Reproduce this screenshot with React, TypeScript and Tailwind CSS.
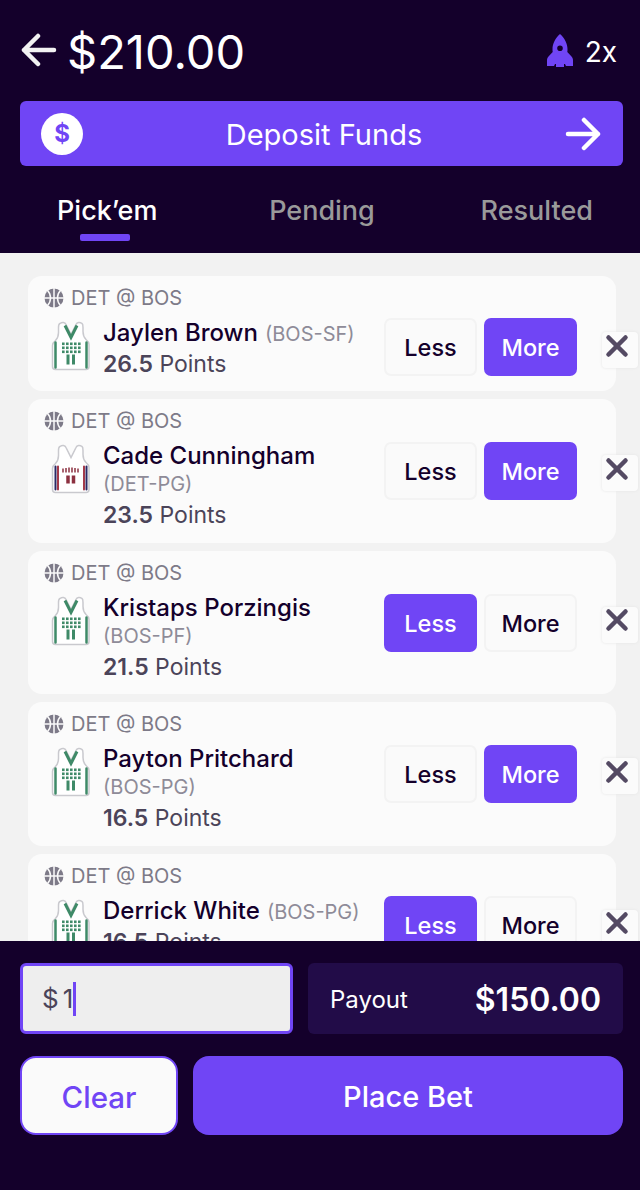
import { X } from "lucide-react";

const font = "font-['Inter','Noto_Sans',sans-serif]";

interface Pick {
  name: string;
  team: string;
  line: string;
  choice: "Less" | "More";
  wrap: boolean;
  away?: boolean;
}

const picks: Pick[] = [
  { name: "Jaylen Brown", team: "(BOS-SF)", line: "26.5", choice: "More", wrap: false },
  { name: "Cade Cunningham", team: "(DET-PG)", line: "23.5", choice: "More", wrap: true, away: true },
  { name: "Kristaps Porzingis", team: "(BOS-PF)", line: "21.5", choice: "Less", wrap: true },
  { name: "Payton Pritchard", team: "(BOS-PG)", line: "16.5", choice: "More", wrap: true },
  { name: "Derrick White", team: "(BOS-PG)", line: "16.5", choice: "Less", wrap: false },
];

function Arrow({ left }: { left?: boolean }) {
  return (
    <svg width="36" height="36" viewBox="0 0 36 36" fill="none" stroke="currentColor" strokeWidth="4.5" strokeLinecap="round" strokeLinejoin="round" className={left ? "rotate-180" : ""}>
      <path d="M3 18h30M19 4l14 14-14 14" />
    </svg>
  );
}

function Rocket() {
  return (
    <svg width="28" height="33" viewBox="0 0 28 33" fill="#7045f5">
      <path fillRule="evenodd" d="M14 0C9.5 4 6.500 9.500 6.500 15c0 1 0 2 .2 3L2.500 22.500C1.300 23.700 1 25 1 26.500V32h7l1-2h10l1 2h7v-5.500c0-1.500-.3-2.800-1.500-4L21.300 18c.2-1 .2-2 .2-3 0-5.500-3-11-7.500-15Zm0 11.500a2.800 2.800 0 1 1 0 5.600 2.800 2.800 0 0 1 0-5.600Z" />
      <path d="M10 29h8v4h-8z" />
    </svg>
  );
}

function Ball() {
  return (
    <svg width="20" height="20" viewBox="0 0 20 20" fill="none" className="shrink-0">
      <circle cx="10" cy="10" r="9.5" fill="#7d7a88" />
      <g stroke="#fafafa" strokeWidth="1.5">
        <path d="M10 0v20M0 10h20" />
        <path d="M3.5 2.500C6 5 6.500 7.500 6.500 10S6 15 3.500 17.500" />
        <path d="M16.500 2.500C14 5 13.500 7.500 13.500 10s.5 5 3 7.500" />
      </g>
    </svg>
  );
}

function Jersey({ away }: { away?: boolean }) {
  const green = "#3f8a68";
  const red = "#a33a4a";
  const rows = [21, 25, 29];
  const cols = [11, 15, 19, 23, 27];
  return (
    <svg width="40" height="50" viewBox="0 0 40 49" className="shrink-0">
      <path
        d="M9 2c2-1.500 5-1.500 6 1l5 10 5-10c1-2.500 4-2.500 6-1 1 .6 1 2 1 4v4c0 4 1 6 3 8 2 1.500 3 3 3 5v22c0 2-1 3-3 3H4.500c-2 0-3-1-3-3V24c0-2 1-3.500 3-5 2-2 3-4 3-8V6c0-2 0-3.400 1.500-4Z"
        fill="#fff"
        stroke="#c9c9ce"
        strokeWidth="1.5"
      />
      {away ? (
        <>
          <path d="M4.500 22v23M35.500 22v23" stroke="#2b2a66" strokeWidth="2" strokeLinecap="round" />
          <path d="M7 22v23M33 22v23" stroke={red} strokeWidth="2" strokeLinecap="round" />
          <path d="M12 24v4M15 23.500v4.500M18 23v5M21 23v5M24 23.500v4.500M27 24v4" stroke="#8c3040" strokeWidth="1.5" />
          <path d="M17 31v8M22.500 31v8" stroke="#8c3040" strokeWidth="3.5" />
        </>
      ) : (
        <>
          <path d="M4.500 21v25M35.500 21v25" stroke={green} strokeWidth="2.5" strokeLinecap="round" />
          <path d="M14 4l6 12 6-12" fill="none" stroke={green} strokeWidth="3" />
          {rows.map((y) =>
            cols.map((x) => <rect key={`${x}-${y}`} x={x} y={y} width="2.6" height="2.6" fill={green} />)
          )}
          <path d="M17 33v10M22.500 33v10" stroke={green} strokeWidth="3" />
        </>
      )}
    </svg>
  );
}

function PickCard({ pick }: { pick: Pick }) {
  const on = "bg-[#7045f5] text-white h-[58px]";
  const off = "bg-[#fafafa] text-[#14002b] border-2 border-[#f3f3f3] h-[58px]";
  return (
    <div className={`relative mb-[8px] ml-[28px] w-[588px] shrink-0 rounded-[14px] bg-[#fbfbfb] pl-[16px] pr-[39px] pt-[10px] ${pick.wrap ? "h-[143.5px]" : "h-[115px]"}`}>
      <div className="flex h-[24px] items-center gap-[7px] text-[20px] leading-[24px] text-[#7d7a88]">
        <Ball />
        <span>DET @ BOS</span>
      </div>
      <div className="mt-[8px] flex items-start">
        <div className="ml-[7px] mt-[3px]">
          <Jersey away={pick.away} />
        </div>
        <div className="ml-[12px] min-w-0 flex-1">
          <div className="text-[24px] font-medium leading-[30px] text-[#14002b]">
            {pick.name}
            {pick.wrap ? (
              <div className="text-[20px] font-normal leading-[26px] text-[#8e8b98]">{pick.team}</div>
            ) : (
              <span className="ml-[7px] text-[20px] font-normal text-[#8e8b98]">{pick.team}</span>
            )}
          </div>
          <div className={`text-[23px] leading-[30px] text-[#4b4459] ${pick.wrap ? "mt-[3px]" : ""}`}>
            <span className="font-semibold">{pick.line}</span> Points
          </div>
        </div>
        <div className={`flex shrink-0 gap-[7px] ${pick.wrap ? "mt-[1px]" : ""}`}>
          <div className={`flex w-[93px] items-center justify-center rounded-[7px] pt-[2px] text-[23.5px] font-medium ${pick.choice === "Less" ? on : off}`}>
            Less
          </div>
          <div className={`flex w-[93px] items-center justify-center rounded-[7px] pt-[2px] text-[23.5px] font-medium ${pick.choice === "More" ? on : off}`}>
            More
          </div>
        </div>
      </div>
      <div className="absolute right-[-22px] top-[56px] flex h-[36px] w-[36px] items-center justify-center rounded-[4px] bg-[#fbfbfb] pb-[9px] pr-[7px] shadow-[0_0_3px_#e4e4e4]">
        <X size={34} strokeWidth={3.2} className="shrink-0 text-[#544a63]" />
      </div>
    </div>
  );
}

export default function App() {
  return (
    <div className={`flex h-[1190px] w-[640px] flex-col overflow-hidden bg-[#14002b] ${font}`}>
      {/* Header */}
      <div className="h-[253px] shrink-0 pl-[20px] pr-[17px]">
        <div className="flex h-[101px] items-center justify-between pb-[1px]">
          <div className="flex items-center gap-[10px] pl-[1px] text-[#f2f2f2]">
            <Arrow left />
            <span className="pt-[2px] text-[47px] leading-none text-white">$210.00</span>
          </div>
          <div className="flex items-center gap-[11px] pr-[6px]">
            <Rocket />
            <span className="pt-[3px] text-[28px] text-white">2x</span>
          </div>
        </div>
        <div className="flex h-[65px] items-center justify-between rounded-[6px] bg-[#7045f5] pl-[21px] pr-[22px] text-white">
          <div className="flex h-[42px] w-[42px] items-center justify-center rounded-full bg-white text-[24px] font-bold text-[#7045f5]">
            $
          </div>
          <span className="pt-[2px] text-[29px]">Deposit Funds</span>
          <Arrow />
        </div>
        <div className="mt-[27px] flex items-start justify-between pl-[37px] pr-[30px] text-[27px] leading-[36px] text-[#9a9a9a]">
          <div className="flex flex-col items-start">
            <span className="font-medium text-white">Pick’em</span>
            <div className="ml-[23px] mt-[5px] h-[7px] w-[50px] rounded-[2px] bg-[#7045f5]" />
          </div>
          <span className="ml-[6px] font-medium">Pending</span>
          <span className="font-medium">Resulted</span>
        </div>
      </div>

      {/* Pick list */}
      <div className="flex min-h-0 flex-1 flex-col overflow-hidden bg-[#f2f2f2] pt-[23px]">
        {picks.map((p) => (
          <PickCard key={p.name} pick={p} />
        ))}
      </div>

      {/* Bet footer */}
      <div className="h-[249px] shrink-0 pl-[20px] pr-[17px] pt-[22px]">
        <div className="flex gap-[15px]">
          <div className="flex h-[71px] w-[273px] items-center rounded-[6px] border-[3px] border-[#7045f5] bg-[#eeeeee] pl-[19px] text-[26px] text-[#4b4459]">
            <span>$</span>
            <span className="ml-[4px]">1</span>
            <span className="h-[34px] w-[3px] bg-[#7045f5]" />
          </div>
          <div className="flex h-[71px] flex-1 items-center justify-between rounded-[6px] bg-[#220c48] pl-[22px] pr-[22px] pt-[3px] text-white">
            <span className="text-[24px]">Payout</span>
            <span className="text-[32px] font-semibold">$150.00</span>
          </div>
        </div>
        <div className="mt-[22px] flex gap-[15px]">
          <div className="flex h-[79px] w-[158px] items-center justify-center rounded-[16px] border-2 border-[#7045f5] bg-[#fafafa] pt-[3px] text-[29.5px] font-medium text-[#7045f5]">
            Clear
          </div>
          <div className="flex h-[79px] flex-1 items-center justify-center rounded-[16px] bg-[#7045f5] pt-[3px] text-[29px] font-medium text-white">
            Place Bet
          </div>
        </div>
      </div>
    </div>
  );
}
